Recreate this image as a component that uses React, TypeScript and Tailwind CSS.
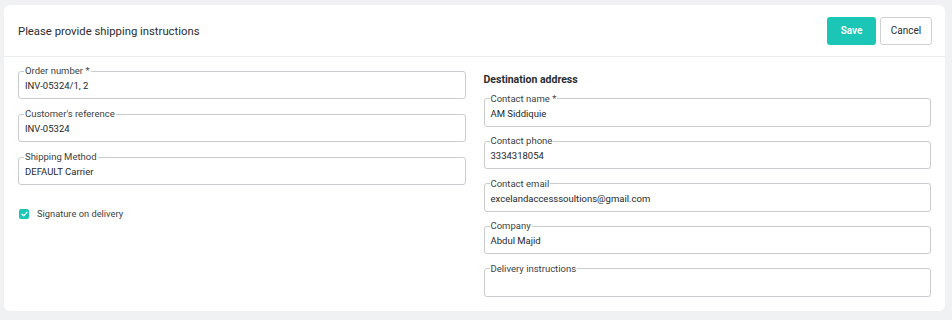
import React from "react";

function Field({ label, value }: { label: string; value?: string }) {
  return (
    <fieldset className="m-0 rounded-[3px] border border-[#c9cbcf] px-[6px] pb-0 pt-0">
      <legend className="ml-[-1px] px-[1px] text-[9.5px] leading-[12px] text-[#3c3f44]">{label}</legend>
      <div className="h-[21px] pt-[2px] text-[9.5px] leading-[13px] text-[#24272b]">{value}</div>
    </fieldset>
  );
}

export default function App() {
  return (
    <div
      className="h-[320px] w-[952px] bg-[#f0f1f3] pl-[4px] pt-[5px]"
      style={{ fontFamily: "Roboto, 'Noto Sans', sans-serif" }}
    >
      <div className="h-[306px] w-[941px] rounded-[6px] bg-white">
        <div className="flex h-[52px] items-center justify-between border-b border-[#ebecee] pl-[14px] pr-[13px]">
          <div className="pt-[3px] text-[11.3px] text-[#2a2d31]">Please provide shipping instructions</div>
          <div className="flex gap-[4px]">
            <button className="h-[28px] w-[49px] rounded-[3px] bg-[#1cc6b6] text-[10px] font-semibold text-white">
              Save
            </button>
            <button className="h-[28px] w-[52px] rounded-[3px] border border-[#cfd1d4] bg-white text-[10px] text-[#2a2d31]">
              Cancel
            </button>
          </div>
        </div>
        <div className="grid grid-cols-2 gap-[18px] px-[14px] pt-[8px]">
          <div className="flex flex-col gap-[9px]">
            <Field label="Order number *" value="INV-05324/1, 2" />
            <Field label="Customer's reference" value="INV-05324" />
            <Field label="Shipping Method" value="DEFAULT Carrier" />
            <label className="mt-[13px] flex items-center gap-[8px] pl-[1px]">
              <span className="flex h-[10px] w-[10px] items-center justify-center rounded-[2px] bg-[#1cc6b6]">
                <svg width="7" height="6" viewBox="0 0 7 6" fill="none">
                  <path d="M1 3.2 L2.8 4.8 L6 1.2" stroke="white" strokeWidth="1.2" strokeLinecap="round" strokeLinejoin="round" />
                </svg>
              </span>
              <span className="text-[9.3px] text-[#3c3f44]">Signature on delivery</span>
            </label>
          </div>
          <div className="flex flex-col gap-[8.5px]">
            <div className="h-[19px] pt-[8px] text-[10.5px] font-bold leading-[13px] text-[#2a2d31]">Destination address</div>
            <Field label="Contact name *" value="AM Siddiquie" />
            <Field label="Contact phone" value="3334318054" />
            <Field label="Contact email" value="excelandaccesssoultions@gmail.com" />
            <Field label="Company" value="Abdul Majid" />
            <Field label="Delivery instructions" value="" />
          </div>
        </div>
      </div>
    </div>
  );
}
